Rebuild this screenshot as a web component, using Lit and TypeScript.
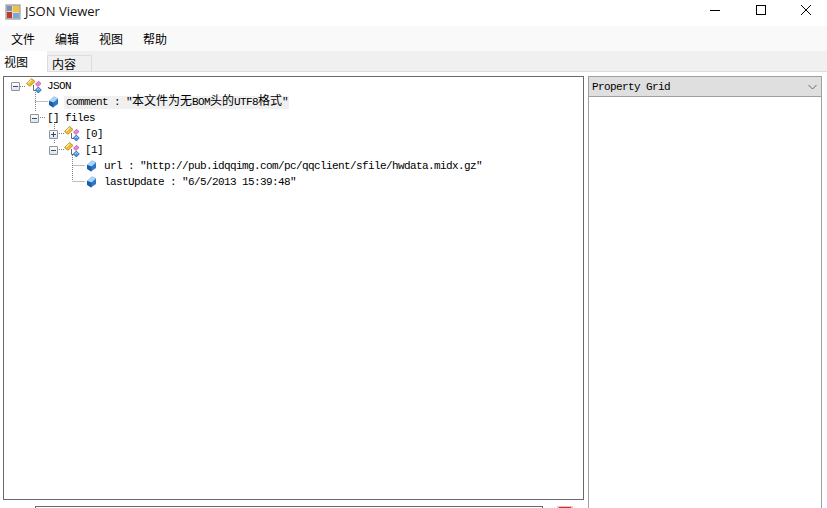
import { LitElement, html, css, svg } from "lit";
import { customElement } from "lit/decorators.js";

const objectIcon = svg`<svg class="ico-obj" width="17" height="16" viewBox="0 0 17 16">
  <path d="M7.5 7V12.5H10" fill="none" stroke="#6a6a6a" stroke-width="1"/>
  <path d="M.5 5.5 5.5.5 9 3.5 4 8.3Z" fill="#f0b92e" stroke="#b98416" stroke-width=".8"/>
  <path d="M2 5.3 5.6 1.8" stroke="#fcedaa" stroke-width="1.2"/>
  <path d="M9.5 6.2 12.5 3.2 15 5.6 12 8.4Z" fill="#e78add" stroke="#a9439c" stroke-width=".7"/>
  <path d="M9.3 12 12.3 9 15.3 12 12.3 15Z" fill="#4a95e2" stroke="#1a5aa5" stroke-width=".7"/>
  <path d="M10.8 12 12.3 10.5 13.8 12" fill="none" stroke="#c4e4fc" stroke-width=".9"/>
</svg>`;

const valueIcon = svg`<svg class="ico-val" width="11" height="12" viewBox="0 0 11 12">
  <path d="M6 .5 10 2.5V8L5 11.5 1 8.8V5Z" fill="#2f78c8"/>
  <path d="M6 .5 10 2.5 5.4 6.5 1 5Z" fill="#a9d7f7"/>
  <path d="M5.4 6.5V11.5L1 8.8V5Z" fill="#1b5ca6"/>
</svg>`;

type Row = {
  depth: number;
  exp?: "minus" | "plus";
  icon?: "obj" | "val";
  text: unknown;
  hl?: boolean;
};

const rows: Row[] = [
  { depth: 0, exp: "minus", icon: "obj", text: "JSON" },
  {
    depth: 1,
    icon: "val",
    hl: true,
    text: html`comment : "<span class="cjk">本文件为无</span>BOM<span class="cjk">头的</span>UTF8<span class="cjk">格式</span>"`,
  },
  { depth: 1, exp: "minus", text: "[] files" },
  { depth: 2, exp: "plus", icon: "obj", text: "[0]" },
  { depth: 2, exp: "minus", icon: "obj", text: "[1]" },
  { depth: 3, icon: "val", text: `url : "http://pub.idqqimg.com/pc/qqclient/sfile/hwdata.midx.gz"` },
  { depth: 3, icon: "val", text: `lastUpdate : "6/5/2013 15:39:48"` },
];

@customElement("app-root")
export class AppRoot extends LitElement {
  static styles = css`
    :host {
      display: block;
      width: 827px;
      height: 508px;
      overflow: hidden;
      background: #fff;
      font-family: "Noto Sans CJK SC", "Noto Sans", sans-serif;
      color: #000;
    }
    .titlebar {
      height: 26px;
      display: flex;
      align-items: center;
      padding-left: 5px;
      background: #fff;
    }
    .app-icon { margin-bottom: 3px; }
    .title {
      margin-left: 4px;
      margin-bottom: 4px;
      font-family: "Open Sans", sans-serif;
      font-size: 13px;
      color: #111;
    }
    .controls {
      margin-left: auto;
      margin-right: -2px;
      margin-bottom: 6px;
      display: flex;
    }
    .ctl {
      width: 45.5px;
      height: 20px;
      display: flex;
      align-items: center;
      justify-content: center;
    }
    .menubar {
      height: 25px;
      padding-left: 4px;
      display: flex;
      align-items: center;
      background: #f9f9f9;
      font-size: 12px;
    }
    .menu { width: 44px; padding-left: 7px; box-sizing: border-box; }
    .tabs {
      height: 20px;
      display: flex;
      align-items: flex-end;
      background: #f0f0f0;
      border-bottom: 1px solid #dcdcdc;
      font-size: 12px;
    }
    .tab {
      box-sizing: border-box;
      display: flex;
      align-items: center;
    }
    .tab.on {
      width: 47px;
      height: 21px;
      margin-bottom: -1px;
      padding-left: 4px;
      background: #fff;
    }
    .tab.off {
      width: 45px;
      height: 16px;
      padding-left: 4px;
      border: 1px solid #dcdcdc;
      border-bottom: 0;
    }
    .main {
      height: 436px;
      box-sizing: border-box;
      padding: 4px 4px 0 3px;
      display: flex;
      gap: 4px;
    }
    .left { width: 581px; display: flex; flex-direction: column; }
    .tree {
      position: relative;
      flex: none;
      height: 424px;
      box-sizing: border-box;
      border: 1px solid #696969;
      padding-top: 1px;
      font-family: "Liberation Mono", "Noto Sans CJK SC", monospace;
      font-size: 11px;
      letter-spacing: -0.6px;
    }
    .lines { position: absolute; left: -4px; top: -77px; pointer-events: none; }
    .row {
      position: relative;
      height: 16px;
      display: flex;
      align-items: center;
      white-space: nowrap;
    }
    .exp {
      box-sizing: border-box;
      width: 9px;
      height: 9px;
      flex: none;
      background: linear-gradient(#fff, #dfe3e8);
      border: 1px solid #8e9296;
      border-radius: 1px;
      display: block;
    }
    .noexp { width: 9px; flex: none; }
    .obj-slot { margin-left: 6px; margin-right: 2px; display: flex; flex: none; }
    .val-slot { margin-left: 9px; margin-right: 5px; display: flex; flex: none; }
    .text { height: 13px; line-height: 13px; padding: 0 1px 0 2px; }
    .text.plain { margin-left: 6px; padding-left: 2px; }
    .text.hl { background: #f0f0f0; }
    .cjk {
      font-family: "Noto Sans CJK SC", sans-serif;
      font-size: 12px;
      letter-spacing: 0;
      line-height: 0;
    }
    .bottom { margin-top: 6px; padding-left: 32px; display: flex; }
    .input { width: 508px; height: 20px; box-sizing: border-box; border: 1px solid #696969; flex: none; }
    .red { margin-left: 14px; }
    .grid {
      width: 234px;
      box-sizing: border-box;
      border-left: 1px solid #a0a0a0;
      border-right: 1px solid #a0a0a0;
      border-top: 1px solid #a0a0a0;
      height: 440px;
    }
    .grid-head {
      height: 20px;
      box-sizing: border-box;
      padding: 0 4px 0 3px;
      display: flex;
      align-items: center;
      justify-content: space-between;
      background: #dfdfdf;
      border-bottom: 1px solid #a0a0a0;
      font-family: "Liberation Mono", monospace;
      font-size: 11px;
      letter-spacing: -0.6px;
    }
  `;

  private renderRow(r: Row) {
    const left = r.depth * 19 + 7;
    return html`<div class="row" style="padding-left:${left}px">
      ${r.exp
        ? svg`<svg class="exp" viewBox="0 0 7 7" width="9" height="9">
            <path d="M1 3.5H6" stroke="#2d4f7a" stroke-width="1"/>
            ${r.exp === "plus" ? svg`<path d="M3.5 1V6" stroke="#2d4f7a" stroke-width="1"/>` : ""}
          </svg>`
        : html`<span class="noexp"></span>`}
      ${r.icon === "obj"
        ? html`<span class="obj-slot">${objectIcon}</span>`
        : r.icon === "val"
          ? html`<span class="val-slot">${valueIcon}</span>`
          : ""}
      <span class="text ${r.hl ? "hl" : ""} ${r.icon ? "" : "plain"}">${r.text}</span>
    </div>`;
  }

  render() {
    return html`
      <div class="titlebar">
        <svg class="app-icon" width="16" height="16" viewBox="0 0 16 16">
          <rect x="1" y="1" width="14" height="14" fill="#d9d9d9" stroke="#8a8a8a"/>
          <rect x="2" y="8" width="5" height="6" fill="#c0392b"/>
          <rect x="8" y="2" width="6" height="6" fill="#f3c23b"/>
          <rect x="2" y="2" width="5" height="5" fill="#7d8fb0"/>
          <rect x="8" y="9" width="6" height="5" fill="#7fa7d6"/>
        </svg>
        <span class="title">JSON Viewer</span>
        <div class="controls">
          <span class="ctl"><svg width="10" height="10"><path d="M0 5.5H10" stroke="#000"/></svg></span>
          <span class="ctl"><svg width="10" height="10"><rect x=".5" y=".5" width="9" height="9" fill="none" stroke="#000"/></svg></span>
          <span class="ctl"><svg width="10" height="10"><path d="M0 0 10 10M10 0 0 10" stroke="#000" stroke-width="1"/></svg></span>
        </div>
      </div>
      <div class="menubar">
        <span class="menu">文件</span><span class="menu">编辑</span><span class="menu">视图</span><span class="menu">帮助</span>
      </div>
      <div class="tabs">
        <span class="tab on">视图</span><span class="tab off">内容</span>
      </div>
      <div class="main">
        <div class="left">
          <div class="tree">
            <svg class="lines" width="120" height="200" fill="none" stroke="#808080" stroke-dasharray="1 1">
              <path d="M20 86.5H26M35.5 92V112M35.5 101.5H48M40 117.5H46M54.5 122V144M59 133.5H65M59 149.5H65M72.5 155V181M72.5 165.5H85M72.5 181.5H85"/>
            </svg>
            ${rows.map((r) => this.renderRow(r))}
          </div>
          <div class="bottom">
            <div class="input"></div>
            <svg class="red" width="16" height="16" viewBox="0 0 16 16">
              <rect x="0" y="0" width="16" height="16" fill="#e9c4c4"/>
              <rect x="2" y="1" width="12" height="12" fill="#d8272d"/>
            </svg>
          </div>
        </div>
        <div class="grid">
          <div class="grid-head">
            <span>Property Grid</span>
            <svg width="9" height="6" viewBox="0 0 9 6"><path d="M.5 1 4.5 5 8.5 1" fill="none" stroke="#666"/></svg>
          </div>
        </div>
      </div>
    `;
  }
}
